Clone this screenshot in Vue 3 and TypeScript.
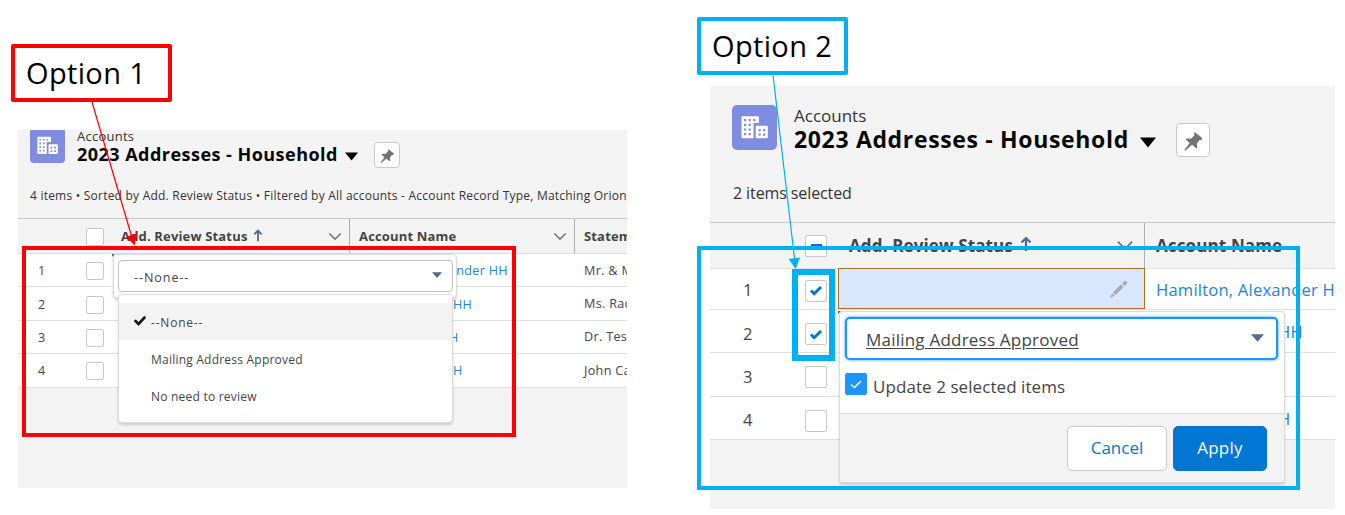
<script setup lang="ts">
interface Row {
  id: number
  account: string
  statement?: string
  checked?: boolean
}

const firstRows: Row[] = [
  { id: 1, account: 'Hamilton, Alexander HH', statement: 'Mr. & Mrs.' },
  { id: 2, account: 'HH', statement: 'Ms. Rac' },
  { id: 3, account: 'H', statement: 'Dr. Test' },
  { id: 4, account: 'H', statement: 'John Ca' },
]

const secondRows: Row[] = [
  { id: 1, account: 'Hamilton, Alexander HH', checked: true },
  { id: 2, account: 'HH', checked: true },
  { id: 3, account: '' },
  { id: 4, account: 'H' },
]

const choices: string[] = ['--None--', 'Mailing Address Approved', 'No need to review']
</script>

<template>
  <main class="board">
    <section class="panel first">
      <header class="head">
        <svg class="account-icon" viewBox="0 0 45 45">
          <rect width="45" height="45" rx="5" fill="#7f8de1" />
          <path d="M10.500 11.300H26a1 1 0 0 1 1 1V18h-5.500v15.300H10.500a1 1 0 0 1-1-1V12.300a1 1 0 0 1 1-1z" fill="#fff" />
          <path d="M24.800 20.800h10a1 1 0 0 1 1 1v10.500a1 1 0 0 1-1 1h-11V21.800a1 1 0 0 1 1-1z" fill="#fff" />
          <path d="M12 14h2.200v2.200H12zM16.600 14h2.200v2.200h-2.200zM21.200 14h2.200v2.200h-2.200zM12 18.700h2.200v2.200H12zM16.600 18.700h2.200v2.200h-2.200zM12 23.400h2.200v2.200H12zM16.600 23.400h2.200v2.200h-2.200zM12 28.100h2.200v2.200H12zM16.600 28.100h2.200v2.200h-2.200zM26.500 24h2.200v2.200h-2.200zM31 24h2.200v2.200H31zM26.500 28.500h2.200v2.200h-2.200zM31 28.500h2.200v2.200H31z" fill="#7f8de1" />
        </svg>
        <div class="titles">
          <span class="object">Accounts</span>
          <h1>2023 Addresses - Household</h1>
        </div>
        <svg class="title-caret" viewBox="0 0 16 10"><path d="M0 0h16L8 10z" fill="#000" /></svg>
        <button class="pin">
          <svg viewBox="0 0 33 33"><path d="M18.500 8.500 26 14.500 25 16.700 23.300 16.500 20.500 20l.5 4.300-1 .9-4.500-3.700-7 6-1-.7 5.500-7.300-4-3.500 1-1 4.500.2 3.500-3.700-.5-1.700z" fill="#747474" /></svg>
        </button>
      </header>
      <p class="summary">4 items • Sorted by Add. Review Status • Filtered by All accounts - Account Record Type, Matching Orion</p>

      <div class="grid">
        <div class="row heading">
          <span></span>
          <span class="check"></span>
          <div class="cell sort">
            <span class="label">Add. Review Status</span>
            <svg class="up" viewBox="0 0 12 16"><path d="M6 15V2M1.500 6.500 6 2l4.500 4.500" fill="none" stroke="#54698d" stroke-width="2.200" /></svg>
            <svg class="chev" viewBox="0 0 16 10"><path d="M1.500 1.500 8 8l6.500-6.500" fill="none" stroke="#747474" stroke-width="1.700" /></svg>
          </div>
          <div class="cell name">
            <span class="label">Account Name</span>
            <svg class="chev" viewBox="0 0 16 10"><path d="M1.500 1.500 8 8l6.500-6.500" fill="none" stroke="#747474" stroke-width="1.700" /></svg>
          </div>
          <div class="cell"><span class="label">Statem</span></div>
        </div>
        <div v-for="row in firstRows" :key="row.id" class="row" :class="'r' + row.id">
          <span class="num">{{ row.id }}</span>
          <span class="check"></span>
          <span></span>
          <span class="cell link">{{ row.account }}</span>
          <span class="cell">{{ row.statement }}</span>
        </div>
        <i class="corner"></i>
        <div class="editor">
          <div class="select">
            <span>--None--</span>
            <svg class="down" viewBox="0 0 12 8"><path d="M0 0h12L6 7z" fill="#54698d" /></svg>
          </div>
        </div>
        <ul class="menu">
          <li v-for="(choice, i) in choices" :key="choice" :class="{ current: i === 0 }">
            <svg class="tick" viewBox="0 0 12 10"><path v-if="i === 0" d="M1.500 5 4.500 8 10.500 1.500" fill="none" stroke="#181818" stroke-width="2.600" stroke-linecap="round" /></svg>
            <span>{{ choice }}</span>
          </li>
        </ul>
      </div>
    </section>

    <section class="panel second">
      <header class="head">
        <svg class="account-icon" viewBox="0 0 45 45">
          <rect width="45" height="45" rx="5" fill="#7f8de1" />
          <path d="M10.500 11.300H26a1 1 0 0 1 1 1V18h-5.500v15.300H10.500a1 1 0 0 1-1-1V12.300a1 1 0 0 1 1-1z" fill="#fff" />
          <path d="M24.800 20.800h10a1 1 0 0 1 1 1v10.500a1 1 0 0 1-1 1h-11V21.800a1 1 0 0 1 1-1z" fill="#fff" />
          <path d="M12 14h2.200v2.200H12zM16.600 14h2.200v2.200h-2.200zM21.200 14h2.200v2.200h-2.200zM12 18.700h2.200v2.200H12zM16.600 18.700h2.200v2.200h-2.200zM12 23.400h2.200v2.200H12zM16.600 23.400h2.200v2.200h-2.200zM12 28.100h2.200v2.200H12zM16.600 28.100h2.200v2.200h-2.200zM26.500 24h2.200v2.200h-2.200zM31 24h2.200v2.200H31zM26.500 28.500h2.200v2.200h-2.200zM31 28.500h2.200v2.200H31z" fill="#7f8de1" />
        </svg>
        <div class="titles">
          <span class="object">Accounts</span>
          <h1>2023 Addresses - Household</h1>
        </div>
        <svg class="title-caret" viewBox="0 0 16 10"><path d="M0 0h16L8 10z" fill="#000" /></svg>
        <button class="pin">
          <svg viewBox="0 0 33 33"><path d="M18.500 8.500 26 14.500 25 16.700 23.300 16.500 20.500 20l.5 4.300-1 .9-4.500-3.700-7 6-1-.7 5.500-7.300-4-3.500 1-1 4.500.2 3.500-3.700-.5-1.700z" fill="#747474" /></svg>
        </button>
      </header>
      <p class="summary">2 items selected</p>

      <div class="grid">
        <div class="row heading">
          <span></span>
          <span class="check"><i class="dash"></i></span>
          <div class="cell sort">
            <span class="label">Add. Review Status</span>
            <svg class="up" viewBox="0 0 12 16"><path d="M6 15V2M1.500 6.500 6 2l4.500 4.500" fill="none" stroke="#54698d" stroke-width="2.200" /></svg>
            <svg class="chev" viewBox="0 0 16 10"><path d="M1.500 1.500 8 8l6.500-6.500" fill="none" stroke="#747474" stroke-width="1.700" /></svg>
          </div>
          <div class="cell"><span class="label">Account Name</span></div>
        </div>
        <div v-for="row in secondRows" :key="row.id" class="row" :class="'r' + row.id">
          <span class="num">{{ row.id }}</span>
          <span class="check">
            <svg v-if="row.checked" class="mark" viewBox="0 0 14 11"><path d="M2 5.500 5.200 8.700 12 2" fill="none" stroke="#0176d3" stroke-width="3" /></svg>
          </span>
          <span :class="{ editing: row.id === 1 }">
            <svg v-if="row.id === 1" class="pencil" viewBox="0 0 18 18"><path d="M12 3.500 14.500 1q.8-.7 1.600 0L17 2q.7.800 0 1.600L14.500 6zM11 4.500 13.500 7 5.500 15 3 12.500zM2.200 13.300 4.700 15.800 0 18z" fill="#a9a9a9" /></svg>
          </span>
          <span class="cell link">{{ row.account }}</span>
        </div>
        <i class="corner"></i>
        <div class="editor">
          <div class="select">
            <span>Mailing Address Approved</span>
            <svg class="down" viewBox="0 0 12 8"><path d="M0 0h12L6 7z" fill="#54698d" /></svg>
          </div>
          <label class="bulk">
            <span class="on"><svg viewBox="0 0 12 9"><path d="M1 4.500 4.500 7.500 11 1" fill="none" stroke="#fff" stroke-width="1.600" /></svg></span>
            <span>Update 2 selected items</span>
          </label>
          <footer>
            <button class="cancel">Cancel</button>
            <button class="apply">Apply</button>
          </footer>
        </div>
      </div>
    </section>

    <div class="outline red-area"></div>
    <div class="outline blue-area"></div>
    <div class="outline checks-area"></div>
    <div class="callout one">Option 1</div>
    <div class="callout two">Option 2</div>
    <svg class="arrows" viewBox="0 0 1345 515">
      <path d="M92 102 131.500 236" stroke="#f00" stroke-width="1.200" />
      <path d="M134.500 245.500 126.200 236.800 137.200 233.300z" fill="#f00" />
      <path d="M773 75 794.700 260" stroke="#00b0f0" stroke-width="1.200" />
      <path d="M795.700 269 788.600 259 800 257.500z" fill="#00b0f0" />
    </svg>
  </main>
</template>

<style>
body {
  margin: 0;
  background: #fff;
}
</style>

<style scoped>
* {
  box-sizing: border-box;
}
.board {
  position: relative;
  display: flex;
  align-items: flex-start;
  width: 1345px;
  height: 515px;
  overflow: hidden;
  background: #fff;
  font-family: "Open Sans", "Noto Sans", sans-serif;
  color: #444;
}
svg {
  display: block;
  flex: none;
}
.panel {
  flex: none;
  overflow: hidden;
  background: #f3f3f3;
}
.first {
  width: 609px;
  height: 358px;
  margin: 130px 0 0 18px;
}
.second {
  width: 625px;
  height: 423px;
  margin: 86px 0 0 83px;
}
.head {
  display: flex;
  align-items: flex-start;
}
.titles {
  display: flex;
  flex-direction: column;
  white-space: nowrap;
}
h1 {
  margin: 0;
  font-weight: 700;
  color: #080808;
}
.object {
  color: #333;
}
.pin {
  padding: 0;
  border: 1px solid #c9c9c9;
  border-radius: 4px;
  background: #fff;
}
.pin svg {
  width: 100%;
  height: 100%;
}
.summary {
  margin: 0;
  white-space: nowrap;
  color: #333;
}
.grid {
  position: relative;
}
.row {
  display: grid;
  align-items: center;
  background: #fff;
  border-bottom: 1px solid #dfdfdf;
  white-space: nowrap;
}
.heading {
  background: #f3f3f3;
  border-top: 1px solid #c9c9c9;
}
.heading .cell {
  display: flex;
  align-items: center;
  height: 100%;
}
.label {
  font-weight: 700;
  color: #444;
}
.sort,
.name {
  border-right: 1px solid #aeaeae;
}
.chev {
  margin-left: auto;
}
.check {
  display: flex;
  align-items: center;
  justify-content: center;
  border: 1px solid #c9c9c9;
  border-radius: 2px;
  background: #fff;
}
.link {
  color: #1b84d8;
}
.editor,
.menu {
  position: absolute;
  background: #fff;
  border: 1px solid #dcdcdc;
  border-radius: 4px;
  box-shadow: 0 2px 3px rgba(0, 0, 0, 0.16);
}
.select {
  display: flex;
  align-items: center;
  justify-content: space-between;
  border: 1px solid #c0c0c0;
  border-radius: 4px;
  background: #fff;
}
.corner {
  position: absolute;
  border-top: 3px solid #2e6db4;
  border-right: 3px solid transparent;
}

/* First list */
.first .head {
  height: 52px;
  padding-left: 12px;
}
.first .account-icon {
  width: 35px;
  height: 35px;
  margin-top: -2px;
}
.first .titles {
  width: 261px;
  margin: -3px 0 0 12px;
}
.first .object {
  font-size: 13px;
  line-height: 18px;
  letter-spacing: 0.25px;
}
.first h1 {
  margin-top: -1px;
  font-size: 18px;
  line-height: 20px;
  letter-spacing: 0.47px;
}
.first .title-caret {
  width: 13px;
  height: 9px;
  margin: 22px 0 0 7px;
}
.first .pin {
  width: 26px;
  height: 26px;
  margin: 12px 0 0 16px;
}
.first .summary {
  height: 36px;
  padding: 5px 0 0 12px;
  font-size: 12px;
  line-height: 18px;
  letter-spacing: 0.22px;
}
.first .row {
  grid-template-columns: 68px 18px 246px 225px 52px;
  height: 33.4px;
  font-size: 12.600px;
  letter-spacing: 0.32px;
}
.first .heading {
  height: 36px;
  font-size: 13px;
  letter-spacing: 0.16px;
}
.first .num {
  padding: 1px 0 0 20px;
}
.first .check {
  width: 18px;
  height: 18px;
  margin-top: 2px;
}
.first .cell {
  padding-left: 9px;
}
.first .link {
  padding-top: 1px;
}
.first .sort {
  padding-left: 17px;
}
.first .r2 .link {
  padding-left: 103px;
}
.first .r3 .link {
  padding-left: 99px;
}
.first .r4 .link {
  padding-left: 103px;
}
.first .up {
  width: 10px;
  height: 13px;
  margin: -2px 0 0 5px;
}
.first .chev {
  width: 14px;
  height: 9px;
  margin-right: 7px;
}
.first .corner {
  left: 94px;
  top: 36px;
}
.first .editor {
  left: 95px;
  top: 36px;
  width: 344px;
  height: 44px;
  padding: 5px 3px 5px 4px;
}
.first .select {
  height: 32px;
  padding: 2px 10px 0 15px;
  font-size: 12.600px;
  letter-spacing: 0.9px;
}
.first .down {
  width: 10px;
  height: 7px;
  margin-top: -4px;
}
.first .menu {
  left: 100px;
  top: 76px;
  width: 335px;
  height: 129px;
  margin: 0;
  padding: 8px 0;
  list-style: none;
  font-size: 12px;
  letter-spacing: 0.22px;
}
.menu li {
  display: flex;
  align-items: center;
  gap: 5px;
  height: 37px;
  padding: 1px 0 0 15px;
}
.menu .current {
  padding-top: 2px;
  background: #f3f3f3;
  letter-spacing: 0.8px;
}
.tick {
  width: 12px;
  height: 10px;
  margin-top: -4px;
}

/* Second list */
.second .head {
  height: 98px;
  padding: 19px 0 0 22px;
}
.second .account-icon {
  width: 45px;
  height: 45px;
}
.second .titles {
  width: 335px;
  margin: -1px 0 0 17px;
}
.second .object {
  font-size: 17px;
  line-height: 23px;
}
.second h1 {
  margin-top: -1px;
  font-size: 23px;
  line-height: 27px;
  letter-spacing: 0.66px;
}
.second .title-caret {
  width: 16px;
  height: 11px;
  margin: 32px 0 0 11px;
}
.second .pin {
  width: 34px;
  height: 34px;
  margin: 18px 0 0 20px;
}
.second .summary {
  height: 38px;
  padding-left: 23px;
  font-size: 16px;
  line-height: 19px;
  letter-spacing: -0.1px;
}
.second .row {
  grid-template-columns: 95px 33px 307px 190px;
  height: 43.300px;
  font-size: 16.600px;
  letter-spacing: 0.2px;
}
.second .heading {
  height: 47px;
  font-size: 17px;
  letter-spacing: 0.13px;
}
.second .r1 {
  height: 41px;
}
.second .num {
  padding: 4px 0 0 33px;
}
.second .r1 .num {
  padding-top: 1px;
}
.second .check {
  width: 22px;
  height: 22px;
  margin-top: 6px;
}
.second .heading .check {
  margin-top: 1px;
}
.second .r1 .check {
  margin-top: 3px;
}
.second .cell {
  padding-left: 11px;
}
.second .r2 .link,
.second .r4 .link {
  padding: 1px 0 0 133px;
}
.dash {
  width: 11px;
  height: 2px;
  margin-top: -2px;
  background: #0176d3;
}
.mark {
  width: 14px;
  height: 11px;
}
.second .up {
  width: 12px;
  height: 16px;
  margin: -4px 0 0 7px;
}
.second .chev {
  width: 18px;
  height: 11px;
  margin-right: 10px;
}
.editing {
  display: flex;
  align-items: center;
  justify-content: flex-end;
  height: 41px;
  margin-top: -1px;
  padding-right: 16px;
  border: 1px solid #b0701a;
  background: #d8e6fe;
}
.pencil {
  width: 18px;
  height: 18px;
}
.second .corner {
  left: 128px;
  top: 89px;
}
.second .editor {
  left: 129px;
  top: 89px;
  width: 446px;
  height: 172px;
  padding-top: 5px;
}
.second .select {
  width: 433px;
  height: 43px;
  margin-left: 5px;
  padding: 2px 12px 0 19px;
  border: 2px solid #1b96ff;
  border-radius: 5px;
  box-shadow: 0 0 3px #1b96ff;
  font-size: 17px;
  letter-spacing: 0.22px;
  text-decoration: underline;
  text-underline-offset: 2px;
}
.second .down {
  width: 13px;
  height: 9px;
  margin-top: -3px;
}
.bulk {
  display: flex;
  align-items: center;
  gap: 6px;
  height: 53px;
  padding: 0 0 0 5px;
  font-size: 17px;
  letter-spacing: 0.07px;
}
.on {
  display: grid;
  place-items: center;
  width: 22px;
  height: 22px;
  margin-top: -5px;
  border-radius: 2px;
  background: #1b96ff;
}
.on svg {
  width: 12px;
  height: 9px;
}
footer {
  display: flex;
  justify-content: flex-end;
  gap: 6px;
  height: 69px;
  padding: 12px 17px 0 0;
  border-top: 1px solid #dedede;
  border-radius: 0 0 4px 4px;
  background: #f3f3f3;
}
footer button {
  height: 45px;
  padding: 0 0 2px;
  border: 1px solid #c9c9c9;
  border-radius: 5px;
  font-family: inherit;
  font-size: 17px;
}
.cancel {
  width: 100px;
  background: #fff;
  color: #0176d3;
}
footer .apply {
  width: 94px;
  border-color: #0176d3;
  background: #0176d3;
  color: #fff;
  font-weight: 500;
  letter-spacing: 0.25px;
}

/* Annotations laid over both lists */
.outline,
.callout,
.arrows {
  position: absolute;
}
.arrows {
  left: 0;
  top: 0;
  width: 1345px;
  height: 515px;
}
.red-area {
  left: 22px;
  top: 246px;
  width: 494px;
  height: 191px;
  border: 4px solid #f00;
}
.blue-area {
  left: 697px;
  top: 246px;
  width: 603px;
  height: 244px;
  border: 4px solid #00b0f0;
}
.checks-area {
  left: 792px;
  top: 269px;
  width: 43px;
  height: 92px;
  border: 6px solid #00b0f0;
}
.callout {
  height: 58px;
  border: 4px solid #f00;
  border-radius: 2px;
  background: #fff;
  color: #000;
  font-size: 29px;
  line-height: 50px;
  letter-spacing: 0.35px;
  white-space: nowrap;
}
.one {
  left: 11px;
  top: 44px;
  width: 161px;
  padding-left: 11px;
}
.two {
  left: 697px;
  top: 17px;
  width: 151px;
  padding-left: 11px;
  border-color: #00b0f0;
}
</style>
